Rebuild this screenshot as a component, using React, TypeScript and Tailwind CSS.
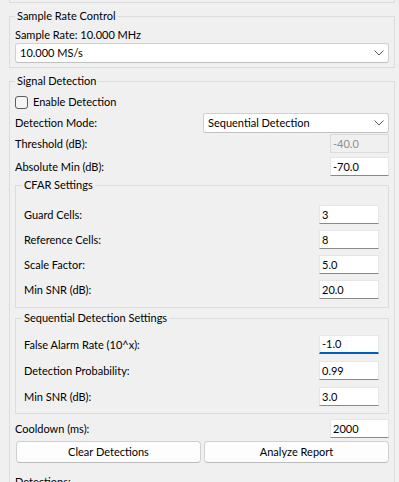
import React from "react";

const Chevron = () => (
  <svg width="10" height="6" viewBox="0 0 10 6" className="shrink-0">
    <path d="M0.5 0.5 L5 5 L9.5 0.5" fill="none" stroke="#5a5a5a" strokeWidth="1" />
  </svg>
);

const Combo = ({ text, className }: { text: string; className?: string }) => (
  <div
    className={
      "h-[20px] bg-white border border-[#d0d0d0] border-b-[#c0c0c0] rounded-[3px] flex items-center justify-between pl-[4px] pr-[4px] " +
      (className || "")
    }
  >
    <span className="leading-[16px]">{text}</span>
    <Chevron />
  </div>
);

const Input = ({
  value,
  w,
  disabled,
  focused,
}: {
  value: string;
  w: string;
  disabled?: boolean;
  focused?: boolean;
}) => {
  if (disabled)
    return (
      <div className={"h-[19px] flex items-center pl-[2px] border border-[#dadada] bg-[#f0f0f0] text-[#8f8f8f] " + w}>
        <span className="leading-[16px]">{value}</span>
      </div>
    );
  if (focused)
    return (
      <div className={"h-[19px] flex items-center pl-[2px] border border-[#e6e6e6] border-b-2 border-b-[#005fb8] bg-white " + w}>
        <span className="leading-[16px]">{value}</span>
      </div>
    );
  return (
    <div className={"h-[19px] flex items-center pl-[2px] border border-[#e6e6e6] border-b-[#8a8a8a] bg-white " + w}>
      <span className="leading-[16px]">{value}</span>
    </div>
  );
};

const Row = ({ label, children, className }: { label: string; children: React.ReactNode; className?: string }) => (
  <div className={"flex items-center justify-between " + (className || "")}>
    <span className="leading-[16px]">{label}</span>
    {children}
  </div>
);

export default function App() {
  return (
    <div
      className="w-[399px] h-[482px] overflow-hidden bg-[#f0f0f0] text-[11px] text-black"
      style={{ fontFamily: 'Lato, "Noto Sans", sans-serif' }}
    >
      <div className="pl-[9px] pr-[4px]">
        <div className="h-[3px] border-x border-b border-[#dcdcdc]" />

        <fieldset className="mt-[5px] border border-[#dcdcdc] px-[5px] pb-[4px]">
          <legend className="px-[2px] h-[16px] leading-[16px]">Sample Rate Control</legend>
          <div className="mt-[3px] h-[16px] leading-[16px]">Sample Rate: 10.000 MHz</div>
          <Combo text="10.000 MS/s" />
        </fieldset>

        <fieldset className="mt-[5px] border border-[#dcdcdc] px-[5px] pb-[20px]">
          <legend className="px-[2px] h-[16px] leading-[16px]">Signal Detection</legend>
          <div className="mt-[5px] h-[16px] flex items-center gap-[5px]">
            <div className="w-[13px] h-[13px] rounded-[3px] border border-[#5c5c5c] bg-[#f5f5f5]" />
            <span className="leading-[16px]">Enable Detection</span>
          </div>
          <Row label="Detection Mode:" className="mt-[3px]">
            <Combo text="Sequential Detection" className="w-[186px]" />
          </Row>
          <Row label="Threshold (dB):" className="mt-[1px]">
            <Input value="-40.0" w="w-[59px]" disabled />
          </Row>
          <Row label="Absolute Min (dB):" className="mt-[4px]">
            <Input value="-70.0" w="w-[59px]" />
          </Row>

          <fieldset className="mt-[1px] border border-[#dcdcdc] pl-[8px] pr-[9px] pb-[8px]">
            <legend className="-ml-[2px] px-[2px] h-[16px] leading-[16px]">CFAR Settings</legend>
            <Row label="Guard Cells:" className="mt-[12px]">
              <Input value="3" w="w-[60px]" />
            </Row>
            <Row label="Reference Cells:" className="mt-[6px]">
              <Input value="8" w="w-[60px]" />
            </Row>
            <Row label="Scale Factor:" className="mt-[6px]">
              <Input value="5.0" w="w-[60px]" />
            </Row>
            <Row label="Min SNR (dB):" className="mt-[6px]">
              <Input value="20.0" w="w-[60px]" />
            </Row>
          </fieldset>

          <fieldset className="mt-[2px] border border-[#dcdcdc] pl-[8px] pr-[9px] pb-[7px]">
            <legend className="-ml-[2px] px-[2px] h-[16px] leading-[16px]">Sequential Detection Settings</legend>
            <Row label="False Alarm Rate (10^x):" className="mt-[9px]">
              <Input value="-1.0" w="w-[60px]" focused />
            </Row>
            <Row label="Detection Probability:" className="mt-[7px]">
              <Input value="0.99" w="w-[60px]" />
            </Row>
            <Row label="Min SNR (dB):" className="mt-[7px]">
              <Input value="3.0" w="w-[60px]" />
            </Row>
          </fieldset>

          <Row label="Cooldown (ms):" className="mt-[5px]">
            <Input value="2000" w="w-[59px]" />
          </Row>

          <div className="mt-[3px] pl-[1px] flex gap-[3px]">
            <button className="flex-1 h-[22px] rounded-[4px] border border-[#d0d0d0] border-b-[#bcbcbc] bg-[#fdfdfd] leading-[16px]">
              Clear Detections
            </button>
            <button className="flex-1 h-[22px] rounded-[4px] border border-[#d0d0d0] border-b-[#bcbcbc] bg-[#fdfdfd] leading-[16px]">
              Analyze Report
            </button>
          </div>

          <div className="mt-[11px] h-[16px] leading-[16px]">Detections:</div>
        </fieldset>
      </div>
    </div>
  );
}
